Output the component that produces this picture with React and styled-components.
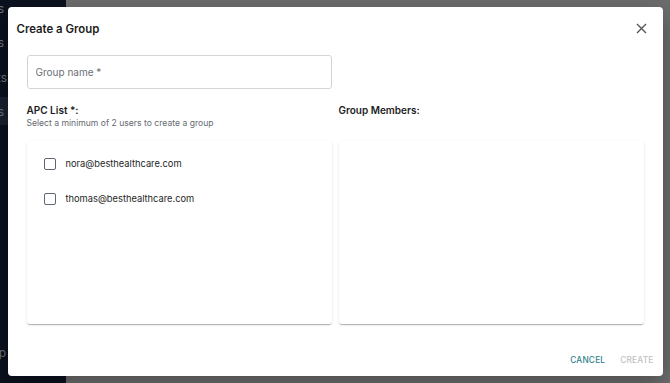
import styled, { createGlobalStyle } from "styled-components";

const GlobalStyle = createGlobalStyle`
  html, body { margin: 0; padding: 0; }
  body {
    font-family: Inter, "Noto Sans", "Liberation Sans", sans-serif;
    background: #6b6b6b;
  }
  * { box-sizing: border-box; }
`;

const Page = styled.div`
  display: flex;
  width: 670px;
  height: 383px;
  overflow: hidden;
  position: relative;
`;

const Sidebar = styled.nav`
  width: 66px;
  background: #0b111e;
  display: flex;
  flex-direction: column;
`;

const NavItem = styled.div`
  height: ${(p) => p.h || 34}px;
  display: flex;
  align-items: center;
  justify-content: flex-end;
  padding-right: ${(p) => p.pr || 62}px;
  font-size: 12px;
  color: #6f7580;
  white-space: nowrap;
  background: ${(p) => (p.active ? "#1a2130" : "transparent")};
  margin-top: ${(p) => p.mt || 0}px;
`;

const Main = styled.div`
  flex: 1;
  background: #6d6d6d;
`;

const Backdrop = styled.div`
  position: absolute;
  inset: 0;
  display: flex;
  align-items: center;
  justify-content: center;
`;

const Dialog = styled.div`
  width: 655px;
  height: 369px;
  background: #fff;
  border-radius: 4px;
  box-shadow: 0 8px 24px rgba(0, 0, 0, 0.3);
  display: flex;
  flex-direction: column;
  padding: 0 19px;
`;

const Header = styled.div`
  display: flex;
  align-items: center;
  justify-content: space-between;
  height: 42px;
  margin-left: -10px;
  padding-top: 1px;
`;

const Title = styled.h2`
  margin: 0;
  font-size: 11.4px;
  font-weight: 600;
  color: #1c1c1c;
`;

const CloseButton = styled.button`
  border: none;
  background: none;
  padding: 0;
  width: 14px;
  height: 14px;
  display: flex;
  align-items: center;
  justify-content: center;
  cursor: pointer;
  margin-right: -5px;
`;

const Input = styled.input`
  margin-top: 6px;
  width: 305px;
  height: 34px;
  border: 1px solid #d4d4d4;
  border-radius: 3px;
  padding: 0 8px;
  font-family: inherit;
  font-size: 10px;
  color: #222;
  outline: none;
  &::placeholder {
    color: #6b6f75;
  }
`;

const Columns = styled.div`
  display: grid;
  grid-template-columns: 305px 305px;
  column-gap: 7px;
  margin-top: 15px;
`;

const Column = styled.div`
  display: flex;
  flex-direction: column;
`;

const Label = styled.div`
  font-size: 10px;
  font-weight: 600;
  color: #1c1c1c;
  height: 12px;
  line-height: 12px;
`;

const Hint = styled.div`
  font-size: 8.6px;
  color: #666a70;
  height: 12px;
  line-height: 12px;
  margin-top: 1px;
`;

const Card = styled.div`
  margin-top: ${(p) => (p.offset ? 25 : 12)}px;
  height: 183px;
  background: #fff;
  border-radius: 3px;
  box-shadow: 0 2px 1px -1px rgba(0, 0, 0, 0.18), 0 1px 1px 0 rgba(0, 0, 0, 0.1),
    0 1px 3px 0 rgba(0, 0, 0, 0.1);
  padding: 11px 0 0 17px;
  display: flex;
  flex-direction: column;
`;

const Row = styled.label`
  display: flex;
  align-items: center;
  height: 23px;
  margin-bottom: 12px;
  gap: 10px;
  font-size: 9.3px;
  color: #1f1f1f;
`;

const Box = styled.span`
  width: 12px;
  height: 12px;
  border: 1.5px solid #5d6673;
  border-radius: 2px;
`;

const Footer = styled.div`
  margin-top: auto;
  height: 33px;
  display: flex;
  align-items: center;
  justify-content: flex-end;
  gap: 15px;
  margin-right: -10px;
`;

const TextButton = styled.button`
  border: none;
  background: none;
  padding: 0;
  font-family: inherit;
  font-size: 8.3px;
  font-weight: 500;
  letter-spacing: 0.2px;
  color: ${(p) => (p.disabled ? "#c0c0c0" : "#2f7f8c")};
  cursor: ${(p) => (p.disabled ? "default" : "pointer")};
`;

const users = ["nora@besthealthcare.com", "thomas@besthealthcare.com"];

const App = () => {
  return (
    <>
      <GlobalStyle />
      <Page>
        <Sidebar>
          <NavItem h={16} pr={62}>Groups</NavItem>
          <NavItem h={52} pr={62}>Devices</NavItem>
          <NavItem h={18} pr={59}>Reports</NavItem>
          <NavItem h={28} mt={11} active pr={62}>Users</NavItem>
          <NavItem h={20} mt={217} pr={60}>Help</NavItem>
        </Sidebar>
        <Main />
        <Backdrop>
          <Dialog>
            <Header>
              <Title>Create a Group</Title>
              <CloseButton aria-label="close">
                <svg width="11" height="11" viewBox="0 0 11 11">
                  <path d="M1 1L10 10M10 1L1 10" stroke="#555" strokeWidth="1.4" />
                </svg>
              </CloseButton>
            </Header>
            <Input placeholder="Group name *" />
            <Columns>
              <Column>
                <Label>APC List *:</Label>
                <Hint>Select a minimum of 2 users to create a group</Hint>
                <Card>
                  {users.map((u) => (
                    <Row key={u}>
                      <Box />
                      {u}
                    </Row>
                  ))}
                </Card>
              </Column>
              <Column>
                <Label>Group Members:</Label>
                <Card offset />
              </Column>
            </Columns>
            <Footer>
              <TextButton>CANCEL</TextButton>
              <TextButton disabled>CREATE</TextButton>
            </Footer>
          </Dialog>
        </Backdrop>
      </Page>
    </>
  );
};

export default App;
